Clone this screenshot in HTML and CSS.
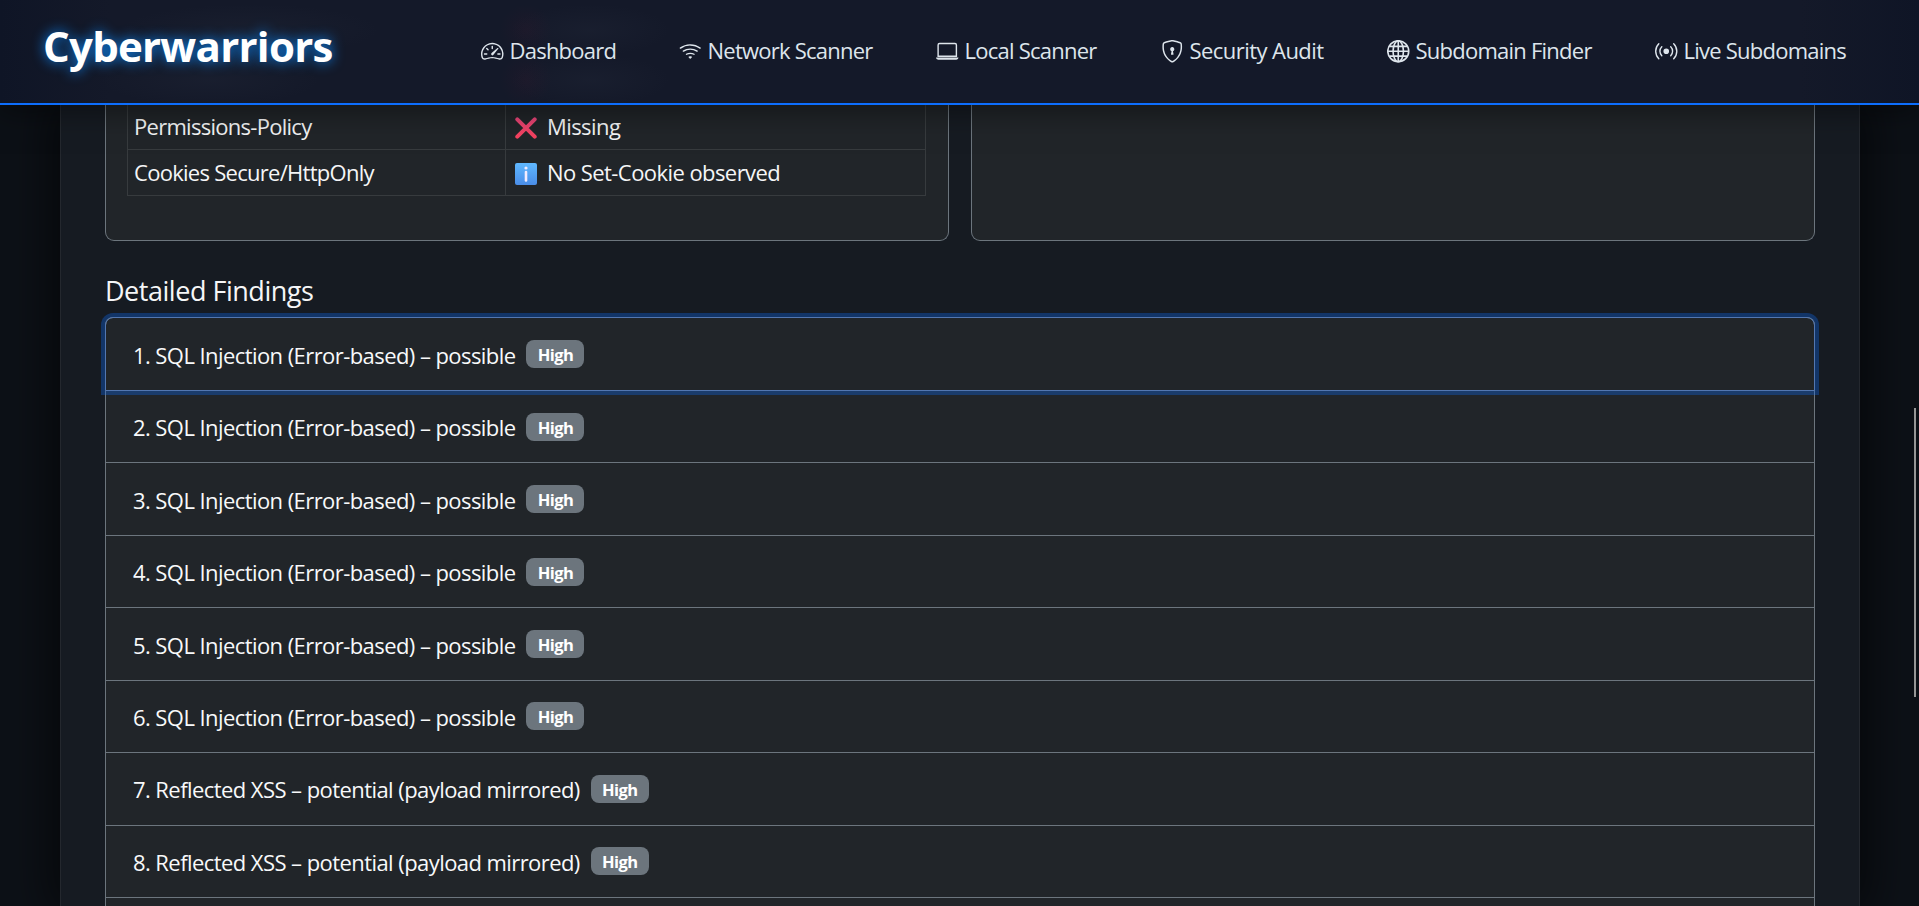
FILE: index.html
```html
<!DOCTYPE html>
<html lang="en">
<head>
<meta charset="utf-8">
<title>Cyberwarriors</title>
<link rel="stylesheet" href="styles.css">
</head>
<body>
<header class="navbar">
  <a class="brand">Cyberwarriors</a>
  <nav class="nav">
    <a class="nav-link"><svg class="icon" viewBox="0 0 16 16"><path d="M8 4a.5.5 0 0 1 .5.5V6a.5.5 0 0 1-1 0V4.500A.5.5 0 0 1 8 4M3.732 5.732a.5.5 0 0 1 .707 0l.915.914a.5.5 0 1 1-.708.708l-.914-.915a.5.5 0 0 1 0-.707M2 10a.5.5 0 0 1 .5-.5h1.586a.5.5 0 0 1 0 1H2.500A.5.5 0 0 1 2 10m9.500 0a.5.5 0 0 1 .5-.5h1.500a.5.5 0 0 1 0 1H12a.5.5 0 0 1-.5-.5m.754-4.246a.39.39 0 0 0-.527-.02L7.547 9.310a.91.91 0 1 0 1.302 1.258l3.434-4.297a.39.39 0 0 0-.029-.518z"/><path fill-rule="evenodd" d="M0 10a8 8 0 1 1 15.547 2.661c-.442 1.253-1.845 1.602-2.932 1.250C11.309 13.488 9.475 13 8 13c-1.474 0-3.310.488-4.615.911-1.087.352-2.490.003-2.932-1.250A8 8 0 0 1 0 10m8-7a7 7 0 0 0-6.603 9.329c.203.575.923.876 1.680.630C4.397 12.533 6.358 12 8 12s3.604.532 4.923.960c.757.245 1.477-.056 1.680-.631A7 7 0 0 0 8 3"/></svg><span>Dashboard</span></a>
    <a class="nav-link"><svg class="icon" viewBox="0 0 16 16"><path d="M15.384 6.115a.485.485 0 0 0-.047-.736A12.440 12.440 0 0 0 8 3C5.259 3 2.723 3.882.663 5.379a.485.485 0 0 0-.048.736.52.52 0 0 0 .668.050A11.450 11.450 0 0 1 8 4c2.507 0 4.827.802 6.716 2.164.205.148.490.130.668-.049"/><path d="M13.229 8.271a.482.482 0 0 0-.063-.745A9.460 9.460 0 0 0 8 6c-1.905 0-3.680.560-5.166 1.526a.48.48 0 0 0-.063.745.525.525 0 0 0 .652.065A8.460 8.460 0 0 1 8 7a8.460 8.460 0 0 1 4.576 1.336c.206.132.480.108.653-.065m-2.183 2.183c.226-.226.185-.605-.100-.750A6.500 6.500 0 0 0 8 9c-1.060 0-2.062.254-2.946.704-.285.145-.326.524-.100.750l.015.015c.160.160.407.190.611.090A5.500 5.500 0 0 1 8 10c.868 0 1.690.201 2.420.560.203.100.450.070.610-.091zM9.060 12.440c.196-.196.198-.520-.040-.660A2 2 0 0 0 8 11.500a2 2 0 0 0-1.020.280c-.238.140-.236.464-.040.660l.706.706a.5.5 0 0 0 .707 0z"/></svg><span>Network Scanner</span></a>
    <a class="nav-link"><svg class="icon" viewBox="0 0 16 16"><path d="M13.500 3a.5.5 0 0 1 .5.5V11H2V3.500a.5.5 0 0 1 .5-.5zm-11-1A1.500 1.500 0 0 0 1 3.500V12h14V3.500A1.500 1.500 0 0 0 13.500 2zM0 12.500h16a1.500 1.500 0 0 1-1.500 1.500h-13A1.500 1.500 0 0 1 0 12.500"/></svg><span>Local Scanner</span></a>
    <a class="nav-link"><svg class="icon" viewBox="0 0 16 16"><path d="M5.338 1.590a61 61 0 0 0-2.837.856.48.48 0 0 0-.328.390c-.554 4.157.726 7.190 2.253 9.188a10.700 10.700 0 0 0 2.287 2.233c.346.244.652.420.893.533q.180.085.293.118a1 1 0 0 0 .101.025 1 1 0 0 0 .100-.025q.114-.034.294-.118c.240-.113.547-.290.893-.533a10.700 10.700 0 0 0 2.287-2.233c1.527-1.997 2.807-5.031 2.253-9.188a.48.48 0 0 0-.328-.390c-.651-.213-1.750-.560-2.837-.855C9.552 1.290 8.531 1.067 8 1.067c-.530 0-1.552.223-2.662.524zM5.072.560C6.157.265 7.310 0 8 0s1.843.265 2.928.560c1.110.300 2.229.655 2.887.870a1.540 1.540 0 0 1 1.044 1.262c.596 4.477-.787 7.795-2.465 9.990a11.800 11.800 0 0 1-2.517 2.453 7 7 0 0 1-1.048.625c-.280.132-.581.240-.829.240s-.548-.108-.829-.240a7 7 0 0 1-1.048-.625 11.800 11.800 0 0 1-2.517-2.453C1.928 10.487.545 7.169 1.141 2.692A1.540 1.540 0 0 1 2.185 1.430 63 63 0 0 1 5.072.560"/><path d="M9.500 6.500a1.500 1.500 0 0 1-1 1.415l.385 1.990a.5.5 0 0 1-.491.595h-.788a.5.5 0 0 1-.490-.595l.384-1.990a1.500 1.500 0 1 1 2-1.415"/></svg><span>Security Audit</span></a>
    <a class="nav-link"><svg class="icon" viewBox="0 0 16 16"><g fill="none" stroke="currentColor" stroke-width="1.150"><circle cx="8" cy="8" r="7.450"/><ellipse cx="8" cy="8" rx="3.700" ry="7.450"/><path d="M8 .5v15M.5 8h15M1.700 4.500h12.600M1.700 11.500h12.600"/></g></svg><span>Subdomain Finder</span></a>
    <a class="nav-link"><svg class="icon" viewBox="0 0 16 16"><path d="M3.050 3.050a7 7 0 0 0 0 9.900.5.5 0 0 1-.707.707 8 8 0 0 1 0-11.314.5.5 0 0 1 .707.707m2.122 2.122a4 4 0 0 0 0 5.656.5.5 0 1 1-.708.708 5 5 0 0 1 0-7.072.5.5 0 0 1 .708.708m5.656-.708a.5.5 0 0 1 .708 0 5 5 0 0 1 0 7.072.5.5 0 1 1-.708-.708 4 4 0 0 0 0-5.656.5.5 0 0 1 0-.708m2.122-2.120a.5.5 0 0 1 .707 0 8 8 0 0 1 0 11.313.5.5 0 0 1-.707-.707 7 7 0 0 0 0-9.900.5.5 0 0 1 0-.707zM10 8a2 2 0 1 1-4 0 2 2 0 0 1 4 0"/></svg><span>Live Subdomains</span></a>
  </nav>
</header>
<main class="panel">
  <div class="cards">
    <section class="card">
      <table class="checks">
        <tr><td>Permissions-Policy</td><td><svg class="emoji" viewBox="0 0 22 22"><defs><linearGradient id="cross" gradientUnits="userSpaceOnUse" x1="0" y1="0" x2="0" y2="22"><stop offset="0" stop-color="#e8457a"/><stop offset="1" stop-color="#f8425c"/></linearGradient></defs><path d="M2.300 2.300 19.700 19.700M19.700 2.300 2.300 19.700" stroke="url(#cross)" stroke-width="4" stroke-linecap="round"/></svg>Missing</td></tr>
        <tr><td>Cookies Secure/HttpOnly</td><td><svg class="emoji" viewBox="0 0 22 22"><defs><linearGradient id="info" x1="0" y1="0" x2="0" y2="1"><stop offset="0" stop-color="#5fb8ff"/><stop offset="1" stop-color="#4a8de8"/></linearGradient></defs><rect width="22" height="22" rx="2" fill="url(#info)"/><path d="M11 9v8.500" stroke="#f3ecff" stroke-width="2.600" stroke-linecap="round"/><circle cx="11" cy="5" r="1.600" fill="#f3ecff"/></svg>No Set-Cookie observed</td></tr>
      </table>
    </section>
    <section class="card"></section>
  </div>
  <h2 class="title">Detailed Findings</h2>
  <div class="accordion">
    <div class="item focused"><span class="label">1. SQL Injection (Error-based) – possible</span><span class="badge">High</span></div>
    <div class="item"><span class="label">2. SQL Injection (Error-based) – possible</span><span class="badge">High</span></div>
    <div class="item"><span class="label">3. SQL Injection (Error-based) – possible</span><span class="badge">High</span></div>
    <div class="item"><span class="label">4. SQL Injection (Error-based) – possible</span><span class="badge">High</span></div>
    <div class="item"><span class="label">5. SQL Injection (Error-based) – possible</span><span class="badge">High</span></div>
    <div class="item"><span class="label">6. SQL Injection (Error-based) – possible</span><span class="badge">High</span></div>
    <div class="item"><span class="label">7. Reflected XSS – potential (payload mirrored)</span><span class="badge">High</span></div>
    <div class="item"><span class="label">8. Reflected XSS – potential (payload mirrored)</span><span class="badge">High</span></div>
  </div>
</main>
<div class="scrollbar"></div>
</body>
</html>
```
FILE: styles.css
```css
* { box-sizing: border-box; }
html, body { height: 906px; overflow: hidden; }
body {
  margin: 0;
  background: #0d1117;
  color: #f5f6f7;
  font-family: "Open Sans", "Noto Sans", sans-serif;
  font-size: 22px;
  letter-spacing: -0.57px;
  display: flex;
  flex-direction: column;
}
.navbar {
  position: relative;
  z-index: 2;
  flex: none;
  height: 105px;
  padding: 0 0 0 43px;
  display: flex;
  align-items: center;
  border-bottom: 2px solid #0d6efd;
  background:
    radial-gradient(ellipse 26px 26px at 526px 30px, rgba(110, 20, 50, .09), transparent),
    radial-gradient(ellipse 26px 26px at 526px 80px, rgba(110, 20, 50, .09), transparent),
    radial-gradient(ellipse 80px 26px at 590px 30px, rgba(80, 90, 110, .08), transparent),
    radial-gradient(ellipse 80px 26px at 590px 80px, rgba(80, 90, 110, .08), transparent),
    radial-gradient(ellipse 130px 26px at 250px 30px, rgba(80, 90, 110, .08), transparent),
    radial-gradient(ellipse 110px 26px at 210px 80px, rgba(80, 90, 110, .08), transparent),
    linear-gradient(90deg, #0f1526 0, #141929 110px, #141929 1800px, #0f1526 100%);
  box-shadow: 0 4px 30px rgba(0, 0, 0, .5);
}
.brand {
  width: 438px;
  margin-top: -12px;
  font-size: 42px;
  font-weight: 700;
  letter-spacing: -0.75px;
  color: #fff;
  text-shadow: 0 0 13px #0d8bfd;
}
.nav { display: flex; letter-spacing: -0.76px; }
.nav-link {
  display: flex;
  align-items: center;
  gap: 6px;
  color: #dee5ec;
  white-space: nowrap;
}
.nav-link span { padding-bottom: 3px; }
.nav-link:nth-child(1) { width: 198px; }
.nav-link:nth-child(2) { width: 257px; }
.nav-link:nth-child(3) { width: 225px; }
.nav-link:nth-child(4) { width: 226px; letter-spacing: -0.56px; }
.nav-link:nth-child(5) { width: 268px; }
.icon { width: 22.500px; height: 22.500px; fill: currentColor; flex: none; }
.panel {
  flex: 1;
  min-height: 0;
  overflow: visible;
  margin: 0 59px 0 60px;
  padding: 0 44px;
  border: solid #24282e;
  border-width: 0 1px;
  background: #161b22;
  box-shadow: 0 0 45px 8px rgba(0, 0, 0, .6);
}
.cards { display: grid; grid-template-columns: 844px 844px; gap: 22px; height: 136px; }
.card {
  border: 1px solid #6c757d;
  border-top: 0;
  border-radius: 0 0 9px 9px;
  background: #212529;
  padding: 0 21px;
}
.checks { border-collapse: collapse; width: 799px; margin-top: -2px; }
.checks td { border: 1px solid #373b3e; height: 46px; padding: 0 6px 1px; white-space: nowrap; }
.checks td:first-child { width: 378px; letter-spacing: -0.72px; }
.emoji { width: 22px; height: 22px; margin: 0 10px 0 3px; vertical-align: -4px; }
.title { margin: 32px 0 0; height: 44px; line-height: 36px; font-size: 27px; font-weight: 400; letter-spacing: -0.47px; }
.accordion { border: 1px solid #6c757d; border-bottom: 0; border-radius: 8px 8px 0 0; background: #212529; height: 589px; }
.item { display: flex; align-items: center; height: 72.450px; padding-left: 27px; border-bottom: 1px solid #6c757d; }
.focused {
  position: relative;
  margin: -1px -1px 0;
  height: 74px;
  padding-left: 27px;
  border: 1px solid #5377b0;
  border-radius: 8px 8px 0 0;
  box-shadow: 0 0 0 4px rgba(13, 110, 253, .32);
}
.label { color: #f8f9fa; padding-top: 1px; }
.badge {
  margin: 0 0 0 11px;
  width: 58px;
  height: 28px;
  border-radius: 8px;
  background: #6c757d;
  color: #fff;
  font-size: 16.500px;
  font-weight: 700;
  line-height: 29px;
  text-align: center;
}
.scrollbar { position: absolute; left: 1914px; top: 408px; width: 2px; height: 289px; background: #969696; }
```
